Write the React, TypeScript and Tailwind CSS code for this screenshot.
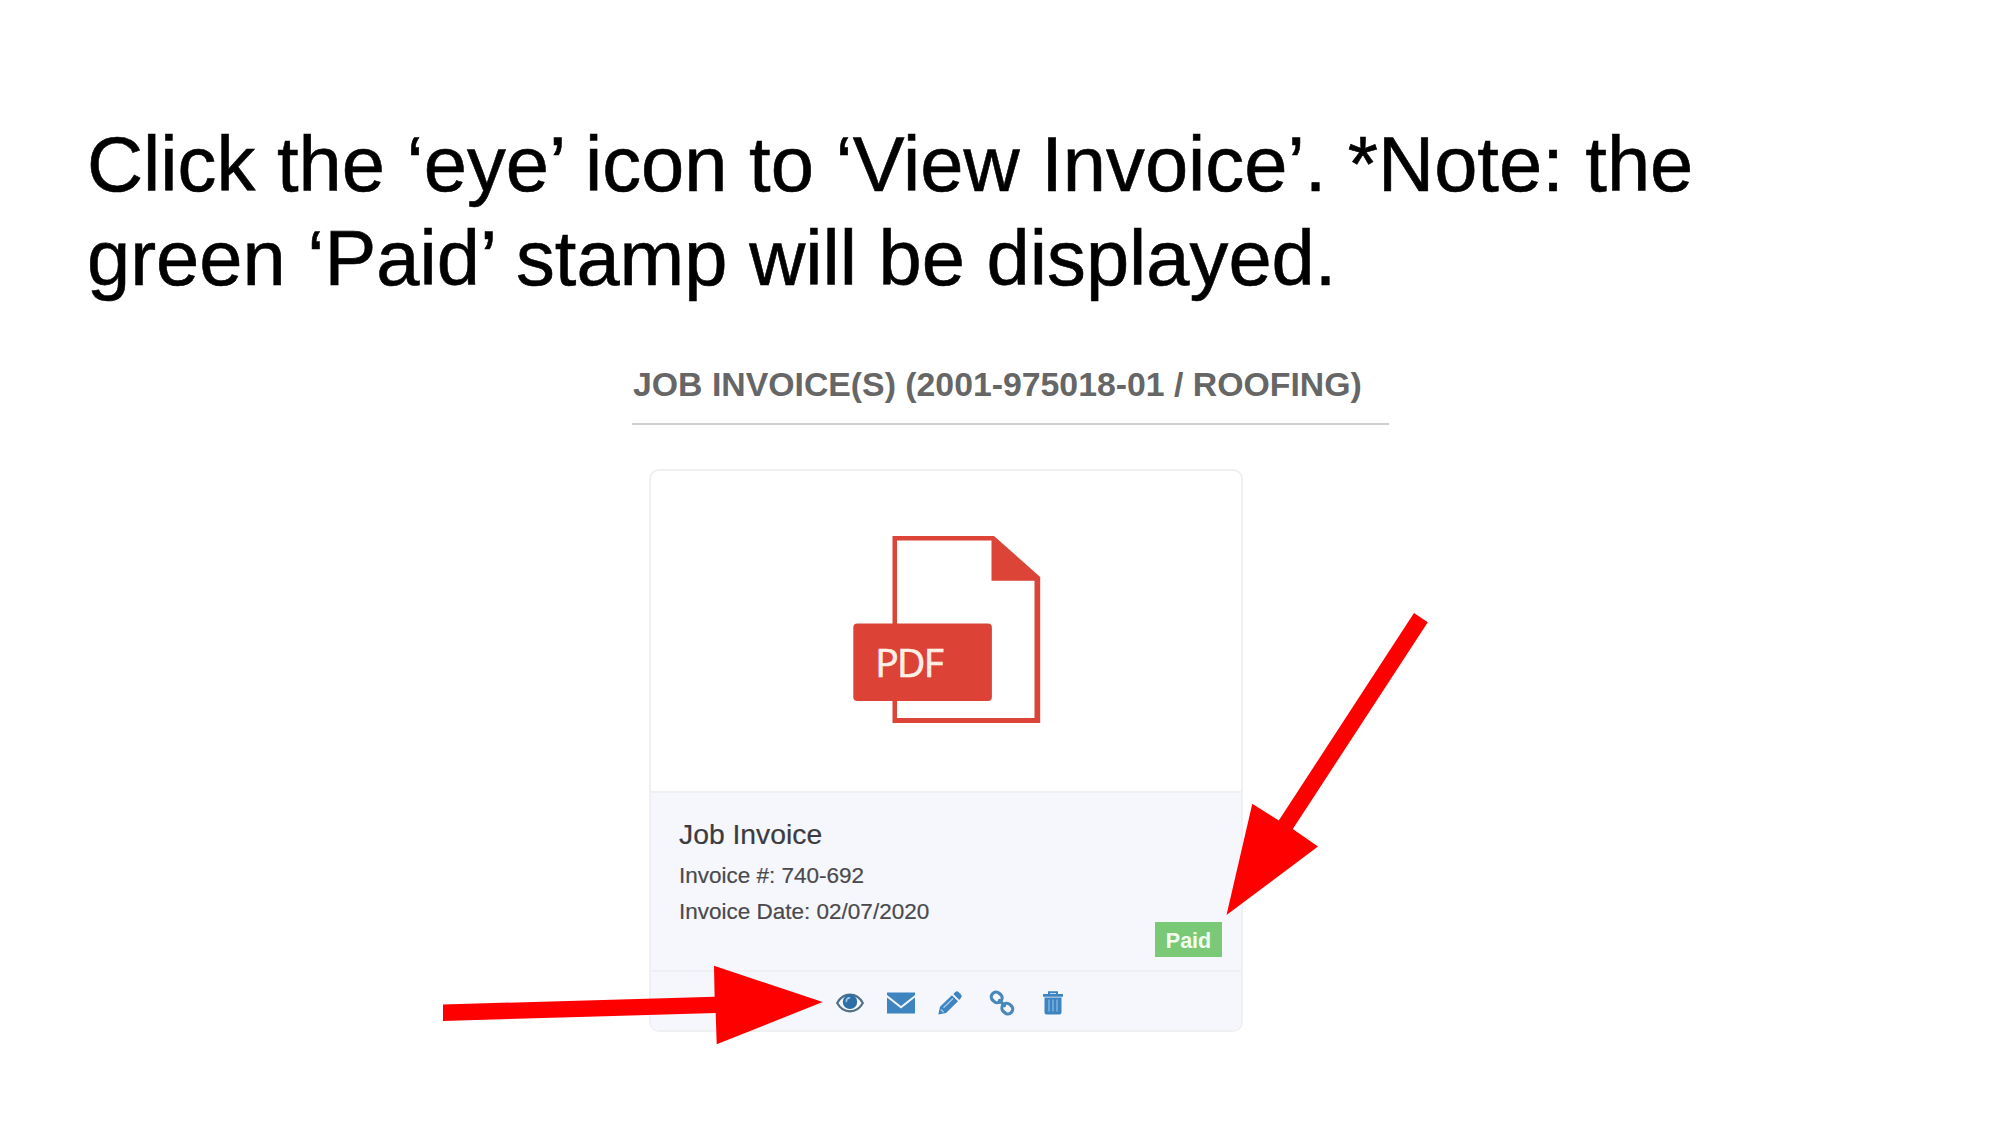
import type { ReactNode } from "react";

function PdfIcon() {
  return (
    <svg className="block h-[190px] w-[190px]" viewBox="852 534 190 190">
      <path d="M892.5 536H994L1040.2 577V723H892.5ZM897 540.5V718H1034.5V580.8H991.5V540.5Z" fill="#dc4437" fillRule="evenodd" />
      <rect x="853.3" y="623.6" width="138.6" height="77.4" rx="4" fill="#dd4236" />
      <text x="875.3" y="676.6" fill="#fff0e6" stroke="#fff0e6" strokeWidth="0.7" fontSize="39" textLength="68.5" fontFamily="'Open Sans', sans-serif">
        PDF
      </text>
    </svg>
  );
}

function Icon({ className, viewBox, children }: { className: string; viewBox: string; children: ReactNode }) {
  return (
    <svg className={className} viewBox={viewBox} fill="none">
      {children}
    </svg>
  );
}

function Actions() {
  return (
    <div className="flex h-[60px] items-center border-t-2 border-[#eef0f5] pl-[185px] pt-[3px]">
      <Icon className="h-6 w-7" viewBox="0 0 28 24">
        <path d="M1.2 12C4 6.8 8.500 3.600 14 3.600S24 6.800 26.800 12C24 17.200 19.500 20.300 14 20.300S4 17.200 1.200 12Z" stroke="#4f7087" strokeWidth="2.200" />
        <circle cx="14" cy="10.800" r="7.200" fill="#2c6ea6" />
        <path d="M10.300 10.500C10.300 8.300 11.600 7 13.500 6.900" stroke="#9cc4e2" strokeWidth="1.700" strokeLinecap="round" />
      </Icon>
      <Icon className="ml-[22px] h-6 w-[30px]" viewBox="0 0 30 24">
        <path d="M1 1.500H29V4L15 15L1 4ZM1 6.500L15 17.500L29 6.500V22.500H1Z" fill="#3d84c0" />
      </Icon>
      <Icon className="ml-[21px] h-[26px] w-[26px]" viewBox="0 0 26 26">
        <path d="M1.300 24.500L3 16.800L14.900 5.200L21 11.300L9 23ZM16.300 3.900L18.600 1.700Q20 .700 21.500 2L24.200 4.700Q25.300 6.200 24.200 7.600L22.300 9.900Z" fill="#3d84c0" />
        <path d="M3.800 19.500L6.600 22.200M6.500 17.800L16 8.500" stroke="#a8cdea" strokeWidth="1.300" />
      </Icon>
      <Icon className="ml-[26px] h-[26px] w-[26px]" viewBox="0 0 26 26">
        <rect x="2.300" y="2.700" width="11" height="9.500" rx="4.500" transform="rotate(42 7.800 7.300)" stroke="#4a88bb" strokeWidth="3.200" />
        <rect x="12.700" y="13.800" width="11" height="9.500" rx="4.500" transform="rotate(42 18.200 18.700)" stroke="#4a88bb" strokeWidth="3.200" />
        <path d="M10.500 10.500L15.500 15.500" stroke="#4a88bb" strokeWidth="3.200" strokeLinecap="round" />
      </Icon>
      <Icon className="ml-[27px] h-[26px] w-[22px]" viewBox="0 0 22 26">
        <path d="M7 4.500V2.200H15V4.500" stroke="#3d84c0" strokeWidth="2" />
        <path d="M1 4H21V6.800H1ZM2.500 7.500H19.500V22.500Q19.500 24.500 17.500 24.500H4.500Q2.500 24.500 2.500 22.500Z" fill="#3d84c0" />
        <path d="M7 9.500V21.500M11 9.500V21.500M15 9.500V21.500" stroke="#7fb3dd" strokeWidth="1.500" />
      </Icon>
    </div>
  );
}

function InvoiceCard() {
  return (
    <article className="ml-[17px] mt-[44px] h-[563px] w-[594px] overflow-hidden rounded-[10px] border-2 border-[#f0f0f3] bg-white">
      <div className="flex h-80 items-start justify-center pl-px pt-[63px]">
        <PdfIcon />
      </div>
      <div className="flex h-[239px] flex-col border-t-2 border-[#eef0f4] bg-[#f6f7fc]">
        <div className="flex flex-1 items-end justify-between pl-[28px] pr-[19px]">
          <div className="self-start whitespace-nowrap pt-[23px] text-[#4a4a4e] [-webkit-text-stroke:0.2px]">
            <h3 className="text-[28.3px] leading-[36px] text-[#3c3c40]">Job Invoice</h3>
            <p className="mt-[6px] text-[22.500px] leading-[35.500px]">Invoice #: 740-692</p>
            <p className="text-[22.500px] leading-[35.500px]">Invoice Date: 02/07/2020</p>
          </div>
          <span className="mb-[13px] flex h-[35px] w-[67px] items-center justify-center bg-[#79c977] pt-[4px] text-[21.500px] font-bold leading-none text-[#f2fff0]">
            Paid
          </span>
        </div>
        <Actions />
      </div>
    </article>
  );
}

function Arrows() {
  return (
    <svg className="pointer-events-none absolute inset-0 h-full w-full" viewBox="0 0 2000 1125" fill="#ff0000">
      <path d="M443 1004.500L714.600 996.800L714 965.700L822.700 1002L716.700 1044.300L715.700 1013L443 1021Z" />
      <path d="M1414 613L1427.800 622.300L1292.800 829L1318 846.500L1226.500 915L1252.300 803.800L1278.800 820.500Z" />
    </svg>
  );
}

export default function App() {
  return (
    <main className="relative h-[1125px] w-[2000px] overflow-hidden bg-white font-['Liberation_Sans',Arial,sans-serif]">
      <h1 className="whitespace-nowrap pl-[87px] pt-[117px] text-[77.700px] leading-[94px] text-black [-webkit-text-stroke:0.6px]">
        Click the ‘eye’ icon to ‘View Invoice’. *Note: the
        <br />
        green ‘Paid’ stamp will be displayed.
      </h1>
      <section className="ml-[632px] mt-[59px] w-[757px]">
        <h2 className="h-[61px] whitespace-nowrap border-b-2 border-[#cfcfcf] pl-px text-[33.800px] font-bold leading-[40px] text-[#666]">
          JOB INVOICE(S) (2001-975018-01 / ROOFING)
        </h2>
        <InvoiceCard />
      </section>
      <Arrows />
    </main>
  );
}
